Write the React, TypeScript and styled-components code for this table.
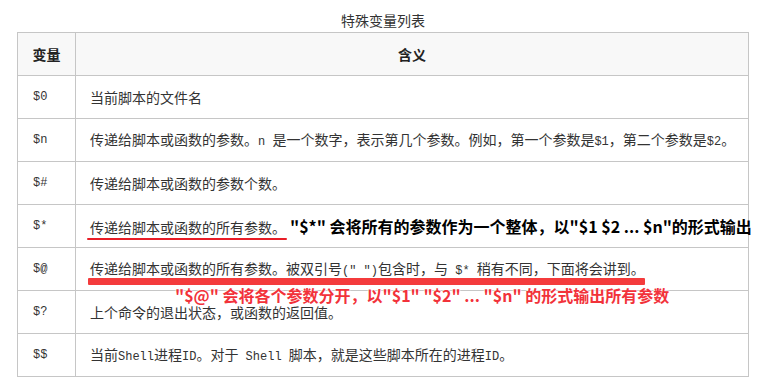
import React from "react";
import styled, { createGlobalStyle } from "styled-components";

const Global = createGlobalStyle`
  html, body { margin: 0; padding: 0; background: #fff; }
  body {
    font-family: "Noto Sans CJK SC", "Noto Sans", sans-serif;
    color: #333;
  }
`;

const Page = styled.div`
  width: 776px;
  height: 391px;
  box-sizing: border-box;
  padding-left: 17px;
  overflow: hidden;
`;

const Table = styled.table`
  width: 732px;
  border-collapse: collapse;
  table-layout: fixed;
  font-size: 14px;
`;

const Caption = styled.caption`
  font-size: 14px;
  line-height: 20px;
  padding: 10px 0 2px;
  color: #333;
`;

const HeadCell = styled.th`
  height: 42px;
  padding: 0;
  background: #f8f8f8;
  border: 1px solid #c6c6c6;
  font-size: 14px;
  font-weight: bold;
  color: #222;
  text-align: center;
  vertical-align: middle;
`;

const Cell = styled.td<{ $var?: boolean }>`
  height: 42px;
  padding: 0 ${(p) => (p.$var ? "15px" : "14px")};
  border: 1px solid #c6c6c6;
  line-height: 20px;
  vertical-align: middle;
  white-space: nowrap;
  overflow: visible;
  color: #333;
  ${(p) =>
    p.$var &&
    `font-family: "Liberation Mono", "DejaVu Sans Mono", monospace; font-size: 12px;`}
`;

const Code = styled.span`
  font-family: "Liberation Mono", "DejaVu Sans Mono", monospace;
  font-size: 12px;
`;

const Marked = styled.span<{ $thick?: boolean }>`
  position: relative;
  display: inline-block;
  &::after {
    content: "";
    position: absolute;
    left: ${(p) => (p.$thick ? "-2px" : "-3px")};
    right: ${(p) => (p.$thick ? "0" : "-1px")};
    bottom: ${(p) => (p.$thick ? "-4px" : "-3px")};
    height: ${(p) => (p.$thick ? "7px" : "2px")};
    border-radius: 1px;
    background: ${(p) => (p.$thick ? "#f43b3c" : "#e81d27")};
  }
`;

const Callout = styled.span<{ $tone: "dark" | "red" }>`
  font-family: "Noto Sans CJK SC", "Noto Sans", sans-serif;
  font-size: 16px;
  font-weight: bold;
  white-space: nowrap;
  color: ${(p) => (p.$tone === "red" ? "#f2323a" : "#000")};
  ${(p) =>
    p.$tone === "red"
      ? `position: absolute; left: 85px; top: 29px; z-index: 2; line-height: 16px;
         text-shadow: 0 0 2px #fff, 0 0 2px #fff, 0 0 2px #fff;`
      : `margin-left: 4px; position: relative; z-index: 2; line-height: 20px;`}
`;

type Row = { name: string; desc: React.ReactNode };

const rows: Row[] = [
  { name: "$0", desc: "当前脚本的文件名" },
  {
    name: "$n",
    desc: (
      <>
        传递给脚本或函数的参数。<Code>n </Code>是一个数字，表示第几个参数。例如，第一个参数是
        <Code>$1</Code>，第二个参数是<Code>$2</Code>。
      </>
    ),
  },
  { name: "$#", desc: "传递给脚本或函数的参数个数。" },
  {
    name: "$*",
    desc: (
      <>
        <Marked>传递给脚本或函数的所有参数。</Marked>
        <Callout $tone="dark">
          "$*" 会将所有的参数作为一个整体，以"$1 $2 ... $n"的形式输出
        </Callout>
      </>
    ),
  },
  {
    name: "$@",
    desc: (
      <Marked $thick>
        传递给脚本或函数的所有参数。被双引号<Code>(" ")</Code>包含时，与<Code> $* </Code>
        稍有不同，下面将会讲到。
        <Callout $tone="red">
          "$@" 会将各个参数分开，以"$1" "$2" ... "$n" 的形式输出所有参数
        </Callout>
      </Marked>
    ),
  },
  { name: "$?", desc: "上个命令的退出状态，或函数的返回值。" },
  {
    name: "$$",
    desc: (
      <>
        当前<Code>Shell</Code>进程<Code>ID</Code>。对于<Code> Shell </Code>
        脚本，就是这些脚本所在的进程<Code>ID</Code>。
      </>
    ),
  },
];

export default function App() {
  return (
    <>
      <Global />
      <Page>
        <Table>
          <Caption>特殊变量列表</Caption>
          <colgroup>
            <col style={{ width: 58 }} />
            <col />
          </colgroup>
          <thead>
            <tr>
              <HeadCell>变量</HeadCell>
              <HeadCell>含义</HeadCell>
            </tr>
          </thead>
          <tbody>
            {rows.map((r) => (
              <tr key={r.name}>
                <Cell $var>{r.name}</Cell>
                <Cell>{r.desc}</Cell>
              </tr>
            ))}
          </tbody>
        </Table>
      </Page>
    </>
  );
}
